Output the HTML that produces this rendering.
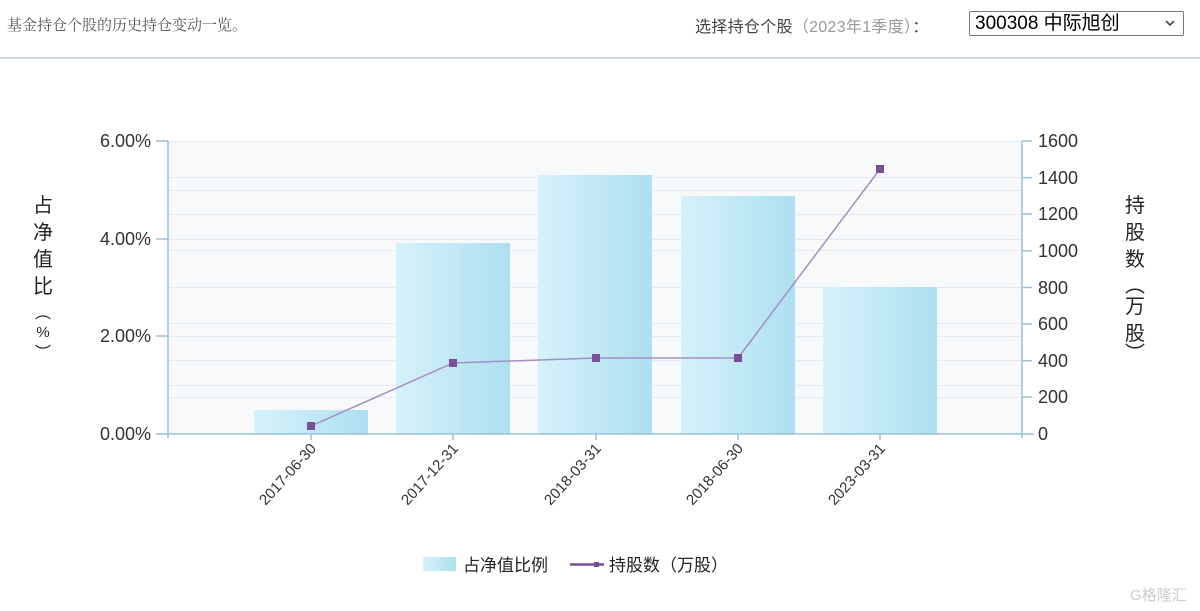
<!DOCTYPE html>
<html><head><meta charset="utf-8"><style>
body{margin:0;width:1200px;height:611px;background:#fff;overflow:hidden;font-family:"Liberation Sans","Noto Sans CJK SC",sans-serif}
.t{position:absolute;left:7px;top:14px;font-size:15px;color:#555;font-family:"Liberation Serif","Noto Serif CJK SC",serif}
.s{position:absolute;left:695px;top:13px;font-size:16px;color:#444;letter-spacing:0.3px}
.s span{color:#999}
.sel{position:absolute;left:969px;top:11px;width:215px;height:25px;border:1px solid #777;border-radius:2px;box-sizing:border-box;font-size:19px;color:#000;padding-left:5px;line-height:23px}
.hr{position:absolute;left:0;top:57px;width:1200px;height:2px;background:#c9dde6}
</style></head><body>
<div class="t">基金持仓个股的历史持仓变动一览。</div>
<div class="s">选择持仓个股<span>（2023年1季度）</span>：</div>
<div class="sel">300308 中际旭创<svg style="position:absolute;right:8px;top:8px" width="10" height="7"><path d="M1 1L5 5L9 1" stroke="#333" stroke-width="1.5" fill="none"/></svg></div>
<div class="hr"></div>
<svg style="position:absolute;left:0;top:0" width="1200" height="611" font-family="Liberation Sans, Noto Sans CJK SC, sans-serif">
<defs><linearGradient id="g" x1="0" x2="1"><stop offset="0" stop-color="#d6f2fb"/><stop offset="1" stop-color="#addff0"/></linearGradient></defs>
<rect x="168" y="141" width="854" height="293" fill="#f7f9fb"/>
<g stroke="#e3eaf0" stroke-width="1">
<line x1="168" x2="1022" y1="141.5" y2="141.5"/><line x1="168" x2="1022" y1="190.5" y2="190.5"/><line x1="168" x2="1022" y1="239.5" y2="239.5"/><line x1="168" x2="1022" y1="287.5" y2="287.5"/><line x1="168" x2="1022" y1="336.5" y2="336.5"/><line x1="168" x2="1022" y1="385.5" y2="385.5"/>
<line x1="168" x2="1022" y1="177.5" y2="177.5"/><line x1="168" x2="1022" y1="214.5" y2="214.5"/><line x1="168" x2="1022" y1="250.5" y2="250.5"/><line x1="168" x2="1022" y1="323.5" y2="323.5"/><line x1="168" x2="1022" y1="360.5" y2="360.5"/><line x1="168" x2="1022" y1="397.5" y2="397.5"/>
</g>
<g fill="url(#g)">
<rect x="254" y="410" width="114" height="24"/><rect x="396" y="243" width="114" height="191"/><rect x="538" y="175" width="114" height="259"/><rect x="681" y="196" width="114" height="238"/><rect x="823" y="287" width="114" height="147"/>
</g>
<g stroke="#9cc0d6" stroke-width="1.5" fill="none">
<line x1="168" y1="141" x2="168" y2="438"/><line x1="1022" y1="141" x2="1022" y2="438"/><line x1="156" y1="434" x2="1034" y2="434"/>
<path d="M156 141h12M156 239h12M156 336h12M1022 141h10M1022 177.6h10M1022 214h10M1022 250.9h10M1022 287.5h10M1022 324h10M1022 360.7h10M1022 397h10M311 434v6M453 434v6M596 434v6M738 434v6M880 434v6"/>
</g>
<polyline points="311,426 453,363 596,358 738,358 880,169" stroke="#a48fc4" stroke-width="1.5" fill="none"/>
<g fill="#7a4f9a"><rect x="307" y="422" width="8" height="8"/><rect x="449" y="359" width="8" height="8"/><rect x="592" y="354" width="8" height="8"/><rect x="734" y="354" width="8" height="8"/><rect x="876" y="165" width="8" height="8"/></g>
<g font-size="18" fill="#333" text-anchor="end">
<text x="151" y="147">6.00%</text><text x="151" y="245">4.00%</text><text x="151" y="342">2.00%</text><text x="151" y="440">0.00%</text>
</g>
<g font-size="18" fill="#333">
<text x="1038" y="147">1600</text><text x="1038" y="184">1400</text><text x="1038" y="220">1200</text><text x="1038" y="257">1000</text><text x="1038" y="294">800</text><text x="1038" y="330">600</text><text x="1038" y="367">400</text><text x="1038" y="403">200</text><text x="1038" y="440">0</text>
</g>
<g font-size="20" fill="#222" text-anchor="middle">
<text x="43" y="212">占</text><text x="43" y="239">净</text><text x="43" y="266">值</text><text x="43" y="293">比</text>
<text x="43" y="318" font-size="16">︵</text><text x="43" y="337" font-size="15">%</text><text x="43" y="358" font-size="16">︶</text>
<text x="1135" y="212">持</text><text x="1135" y="239">股</text><text x="1135" y="266">数</text>
<text x="1135" y="292" font-size="20">︵</text>
<text x="1135" y="313">万</text><text x="1135" y="340">股</text>
<text x="1135" y="360" font-size="20">︶</text>
</g>
<g font-size="15" fill="#333" text-anchor="end">
<text transform="translate(317,449) rotate(-48)">2017-06-30</text>
<text transform="translate(459,449) rotate(-48)">2017-12-31</text>
<text transform="translate(602,449) rotate(-48)">2018-03-31</text>
<text transform="translate(744,449) rotate(-48)">2018-06-30</text>
<text transform="translate(886,449) rotate(-48)">2023-03-31</text>
</g>
<rect x="423" y="557" width="33" height="14" fill="url(#g)"/>
<text x="463" y="571" font-size="17" fill="#222">占净值比例</text>
<line x1="570" y1="564.5" x2="604" y2="564.5" stroke="#7a4f9a" stroke-width="2.5"/>
<rect x="594" y="562" width="5" height="5" fill="#7a4f9a"/>
<text x="609" y="571" font-size="17" fill="#222">持股数（万股）</text>
<text x="1130" y="600" font-size="15" fill="#ccc">G格隆汇</text>
</svg>
</body></html>
